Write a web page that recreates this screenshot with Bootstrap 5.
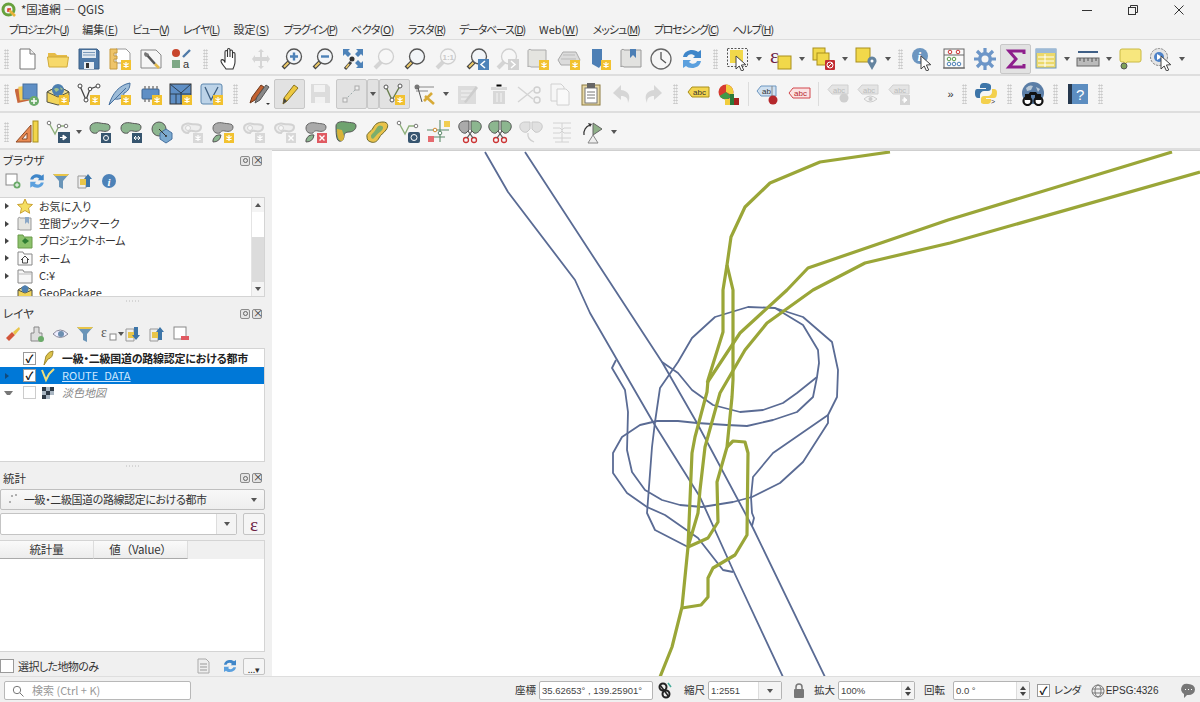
<!DOCTYPE html>
<html lang="ja"><head><meta charset="utf-8"><title>QGIS</title>
<link rel="stylesheet" href="https://cdn.jsdelivr.net/npm/bootstrap@5.3.0/dist/css/bootstrap.min.css">
<script src="https://cdn.jsdelivr.net/npm/bootstrap@5.3.0/dist/js/bootstrap.bundle.min.js"></script>
<style>
html,body{height:702px;overflow:hidden}
body{font-family:"Noto Sans CJK JP","Noto Sans",sans-serif;font-size:11px;color:#333;background:#f0f0f0;font-feature-settings:"palt";line-height:1.2;width:1200px}
.qshell{height:702px}
.qtitle{height:20px;background:#f3f3f3;font-size:11.5px;padding-left:1px}
.qmenu{height:20px;background:#f2f2f2;padding-left:9px;gap:14px;font-size:11px;border-bottom:1px solid #dcdcdc;white-space:nowrap}
.k05{letter-spacing:-.5px}.k10{letter-spacing:-1px}.k12{letter-spacing:-1.25px}.k14{letter-spacing:-1.45px}
.qbar{background:#f5f5f5;border-bottom:2px solid #dedede;padding-left:1px;flex:none}
.qb1{height:36px;padding-top:3px}.qb2{height:37px;padding-top:1px}.qb3{height:37px;padding-top:3px}
.ce{width:30.8px;height:30px;flex:none}
.ce svg,.qi{width:24px;height:24px;display:block}
.on{background:#e2e2e2;border:1px solid #c8c8c8;border-radius:2px}
.hd{width:15px;height:28px;flex:none}
.hd1{width:11px}.hd2{width:16px}.hd3{width:13px}.hd4{width:14px}.hd5{width:18px}
.hd i{display:block;width:5px;height:20px;background-image:radial-gradient(#c4c4c4 .8px,transparent .9px);background-size:2.5px 3px}
.ca{width:12px;height:30px;flex:none}
.cb{width:11px}
.ca i{display:block;border-left:3.5px solid transparent;border-right:3.5px solid transparent;border-top:4px solid #555}
.sepv{width:8px;height:26px;flex:none}
.sepv i{display:block;width:1px;height:24px;background:#dcdcdc}
.qmain{height:526px}
.qside{width:265px;flex:none}
.qsplit{width:7px;flex:none;background:#f0f0f0}
.qmap{flex:1;background:#fff;border-top:1px solid #cfcfcf;min-width:0}
.qmap svg{width:928px;height:525px;display:block}
.pt{height:18px;padding:0 3px;font-size:11.5px;white-space:nowrap}
.ptop{margin-top:2px}
.pb{width:10px;height:10px;border:1px solid #8c8c8c;border-radius:2px;background:#e4e4e4;position:relative;margin-left:2px;flex:none;display:block}
.pb::after{content:"";position:absolute;left:1.5px;top:1.5px;width:5px;height:5px;border-radius:50%;border:1px solid #666}
.px::after{border-radius:0;border:0;left:0;top:-2px;width:8px;height:10px;content:"×";font-size:10px;line-height:10px;text-align:center;color:#333}
.ptools{height:22px;padding-left:4px;gap:0}
.ptools>span{width:24px;height:22px;flex:none}
.ptools svg{width:18px;height:18px;display:block}
.tr{background:#fff;border:1px solid #d4d4d4;border-left:0;overflow:hidden}
.tr1{height:101px;margin-top:5px}
.tr2{height:115px;margin-top:3px;padding-top:1px}
.trow{height:17.3px;padding:0;border:0;background:transparent;font-size:11px;color:#333;border-radius:0;flex:none;white-space:nowrap}
.tw{width:13px;flex:none}
.tw i{display:block;margin-left:5px;border-top:3.5px solid transparent;border-bottom:3.5px solid transparent;border-left:4px solid #444}
.tw .dn{margin-left:4px;border-left:3.5px solid transparent;border-right:3.5px solid transparent;border-top:4px solid #777;border-bottom:0}
.tic{width:16px;height:16px;margin:0 6px 0 4px;flex:none;display:block}
.tic2{margin:0 6px 0 4px}
.qbold{letter-spacing:-.25px;color:#222;font-weight:700}
.qroute{font-size:11px;text-decoration:underline}
.qck{width:13px;height:13px;border:1px solid #9a9a9a;background:#fff;flex:none;font-size:11px;line-height:11px;text-align:center;color:#111;font-weight:700;display:block}
.qckm{margin-left:10px}
.qsel{background:#0078d7;color:#cfe8ff}
.qsb{width:13px;flex:none;border-left:1px solid #e4e4e4;background:#f4f4f4}
.qsa{height:14px;flex:none}
.qsa i{display:block;border-left:3.5px solid transparent;border-right:3.5px solid transparent}
.qst{height:25px;background:#fff;flex:none}
.qsg{flex:1;background:#dcdcdc}
.qgrip{height:8px;flex:none}
.qgrip i{display:block;width:16px;height:2px;background-image:radial-gradient(#bbb .7px,transparent .8px);background-size:3px 2px}
.qcombo{height:21px;margin-top:2px;background:linear-gradient(#f8f8f8,#eee);border:1px solid #bfbfbf;border-radius:2px;font-size:11px;letter-spacing:-.4px;padding:0 7px 0 5px;white-space:nowrap}
.qinp{height:22px;border:1px solid #c4c4c4;background:#fff;border-radius:2px}
.qeps{width:22px;height:22px;border:1px solid #c4c4c4;border-radius:2px;background:#f5f5f5;font:19px/1 "Liberation Serif",serif;color:#6d1f45}
.qtb{height:112px;margin-top:5px;background:#fff;border:1px solid #d4d4d4;border-left:0;overflow:hidden;flex:none}
.qhd{height:18px;background:#f0f0f0}
.qhc{height:18px;width:94px;flex:none;background:linear-gradient(#fafafa,#ececec);border-bottom:1px solid #aaa;border-right:1px solid #ddd;font-size:11.5px;font-feature-settings:normal;letter-spacing:-.2px}
.qbot{height:20px;margin-top:4px;white-space:nowrap}
.qsl{font-size:11px;letter-spacing:-.6px}
.qgp{margin-right:11px}
.qdots{width:22px;height:17px;border:1px solid #c4c4c4;border-radius:2px;background:#f5f5f5;font-size:9px;line-height:8px;flex:none}
.qstat{height:25px;background:#f0f0f0;border-top:1px solid #dedede;font-size:10.5px;padding:2px 0 0 4px;white-space:nowrap}
.qstat span{flex:none}
.qsearch{width:187px;height:19px;background:#fff;border:1px solid #b8b8b8;border-radius:2px;color:#999;font-size:11px;padding-left:7px;flex:none}
.qf{height:19px;background:#fff;border:1px solid #b4b4b4;border-radius:2px;font:9.5px "Liberation Sans",sans-serif;padding-left:2px;color:#444;flex:none}
.qsp{width:13px;align-self:stretch;flex:none;border-left:1px solid #ddd;background:#f4f4f4;gap:2px}
.qsp i{display:block;border-left:3px solid transparent;border-right:3px solid transparent}
.up{border-bottom:4px solid #444}.dw{border-top:4px solid #444}
.qcm{width:23px;align-self:stretch;flex:none;border-left:1px solid #ddd;background:#f4f4f4}
.qcm i{display:block;border-left:3.5px solid transparent;border-right:3.5px solid transparent;border-top:4px solid #555}
.s1{margin-left:324px}.s2{margin-left:3px;width:114px}.s3{margin:0 11px 0 4px}.s4{margin-left:3px;width:74px}.s5{margin:0 9px 0 11px}.s6{margin-left:3px;width:77px}.s7{margin-left:9px}.s8{margin-left:8px;width:77px}.s9{margin-left:7px}.s10{margin-left:4px;letter-spacing:-.5px}.s11{margin-left:10px}.s12{font:10px "Liberation Sans",sans-serif;margin-left:1px}.s13{margin-left:23px}
.qmore{width:43px;padding-left:29px;font:11px "Liberation Sans",sans-serif;flex:none}
.blu{stroke:#5a6b94;stroke-width:1.8;fill:none;stroke-linejoin:round}
.grn{stroke:#9aa638;stroke-width:3.2;fill:none;stroke-linejoin:round}
</style></head><body>
<svg width="0" height="0" class="position-absolute"><defs>
<g id="bd"><rect x="13" y="13" width="10" height="10" fill="#f2c230"/><path d="M18 15v6M15.4 16.5l5.2 3M15.4 19.5l5.2-3" stroke="#fff" stroke-width="1.2"/></g>
<g id="bg"><rect x="13" y="13" width="10" height="10" fill="#d8d8d8"/><path d="M18 15v6M15.4 16.5l5.2 3M15.4 19.5l5.2-3" stroke="#fff" stroke-width="1.2"/></g>
<g id="mg"><path d="M9 15L3 21" stroke="#444" stroke-width="4"/><path d="M8.5 15.5L4 20" stroke="#eecb6a" stroke-width="2"/><circle cx="14" cy="9.5" r="7.5" fill="#f2f5f8" stroke="#555" stroke-width="1.3"/></g>
<g id="mx"><path d="M9 15L3 21" stroke="#d4d4d4" stroke-width="4"/><circle cx="14" cy="9.5" r="7.5" fill="#f7f7f7" stroke="#d0d0d0" stroke-width="1.3"/></g>
<path id="blob" d="M2 8c0-5 6-6 10-5s10 0 10 4-4 5-8 4-5 2-5 2C5 14 2 12 2 8z" fill="#8cb68f" stroke="#555"/>
<path id="blbg" d="M2 8c0-5 6-6 10-5s10 0 10 4-4 5-8 4-5 2-5 2C5 14 2 12 2 8z" fill="#aaa" stroke="#666"/>
<g id="ring"><path d="M2 8c0-4 5-5 9-4s10-1 10 3-4 5-8 4-5 2-5 2C5 13 2 11 2 8z" fill="#eee" stroke="#d2d2d2" stroke-width="2"/><circle cx="8" cy="8" r="2.5" fill="#f7f7f7" stroke="#d2d2d2"/></g>
<g id="cur"><path d="M10 9l0 13 3.2-3 2.3 5 2.2-1-2.3-5 4.4-.3z" fill="#fff" stroke="#444" stroke-width="1"/></g>
<g id="vv"><path d="M4 5l6 13 8-14" fill="none" stroke="#6a7f4f" stroke-width="1.4"/><circle cx="4" cy="5" r="2" fill="#fff" stroke="#555"/><circle cx="18" cy="4" r="2" fill="#fff" stroke="#555"/><circle cx="10" cy="18" r="2" fill="#fff" stroke="#555"/></g>
<g id="doc"><path d="M5 2h10l5 5v15H5z" fill="#fff" stroke="#777"/><path d="M15 2v5h5" fill="#eee" stroke="#777"/></g>
<g id="abc"><path d="M6 5h17v10H6l-4-5z" fill="#f3d54f" stroke="#a98f1c"/><text x="7" y="13" font-size="8" font-family="Liberation Sans" fill="#333">abc</text></g>
<g id="abg"><path d="M6 3h16v9H6l-4-4.500z" fill="#e4e4e4" stroke="#d0d0d0"/><text x="7" y="10.500" font-size="7.500" font-family="Liberation Sans" fill="#bbb">abc</text></g>
<g id="sc"><circle cx="8" cy="20" r="2.500" fill="none" stroke="#c33" stroke-width="1.300"/><circle cx="16" cy="20" r="2.500" fill="none" stroke="#c33" stroke-width="1.300"/><path d="M9 18l5-7M15 18l-5-7" stroke="#555" stroke-width="1.200"/></g>
</defs></svg>
<div class="qshell d-flex flex-column">
<header class="qtitle d-flex align-items-center">
<svg class="qi me-1" style="width:16px;height:16px" viewBox="0 0 16 16"><circle cx="7.500" cy="7.500" r="5.500" fill="none" stroke="#67a13d" stroke-width="3"/><path d="M7 7l7 7" stroke="#e8b33a" stroke-width="2.600"/><path d="M7 10V7h3" fill="none" stroke="#d33" stroke-width="1.400"/></svg>
<span>*国道網 — QGIS</span>
<span class="ms-auto d-flex align-items-center" style="gap:36px;padding-right:16px">
<svg width="10" height="10" viewBox="0 0 10 10"><path d="M0 5.500h10" stroke="#333"/></svg>
<svg width="10" height="10" viewBox="0 0 10 10"><rect x=".5" y="2.500" width="7" height="7" fill="none" stroke="#333"/><path d="M2.500 2.500v-2h7v7h-2" fill="none" stroke="#333"/></svg>
<svg width="10" height="10" viewBox="0 0 10 10"><path d="M.5.500l9 9M9.500.500l-9 9" stroke="#333"/></svg>
</span></header>
<nav class="qmenu d-flex align-items-center">
<span class="k14">プロジェクト(<u>J</u>)</span><span>編集(<u>E</u>)</span><span class="k12">ビュー(<u>V</u>)</span><span class="k10">レイヤ(<u>L</u>)</span><span>設定(<u>S</u>)</span><span class="k12">プラグイン(<u>P</u>)</span><span class="k05">ベクタ(<u>O</u>)</span><span class="k10">ラスタ(<u>R</u>)</span><span class="k12">データベース(<u>D</u>)</span><span>Web(<u>W</u>)</span><span class="k10">メッシュ(<u>M</u>)</span><span class="k12">プロセシング(<u>C</u>)</span><span class="k10">ヘルプ(<u>H</u>)</span>
</nav>
<div class="qbar qb1 d-flex align-items-center">
<span class="hd hd1 d-flex align-items-center justify-content-center"><i></i></span>
<span class="ce d-flex align-items-center justify-content-center"><svg viewBox="0 0 24 24"><use href="#doc"/></svg></span>
<span class="ce d-flex align-items-center justify-content-center"><svg viewBox="0 0 24 24"><path d="M2 6h7l2 2h10v4H2z" fill="#e6bc48"/><path d="M3 20L1.500 10h21L21 20z" fill="#f7d96b" stroke="#d0aa3a"/></svg></span>
<span class="ce d-flex align-items-center justify-content-center"><svg viewBox="0 0 24 24"><path d="M2 2h18l2 2v18H2z" fill="#4f7aa8" stroke="#3b5f86"/><rect x="5" y="3" width="14" height="8" fill="#dfe8f0"/><path d="M6 5.500h12M6 8h12" stroke="#7a9abb"/><rect x="7" y="15" width="10" height="7" fill="#e8eef4"/><rect x="9" y="16" width="3" height="5" fill="#333"/></svg></span>
<span class="ce d-flex align-items-center justify-content-center"><svg viewBox="0 0 24 24"><path d="M8 2h10l4 4v10H8z" fill="#fff" stroke="#999"/><path d="M2 2h7v4H6v3h3v3H6v3h3v7H2z" fill="#eec46a" stroke="#c79a3c"/><use href="#bd"/></svg></span>
<span class="ce d-flex align-items-center justify-content-center"><svg viewBox="0 0 24 24"><path d="M2 3h15l5 5v13H2z" fill="#f6f6f6" stroke="#888"/><path d="M8 8l8 9" stroke="#555" stroke-width="2.600"/><path d="M16 17l4 4" stroke="#e3b94b" stroke-width="2.600"/><path d="M6 5a3 3 0 0 0 1 5l2-1 1-2z" fill="#777"/></svg></span>
<span class="ce d-flex align-items-center justify-content-center"><svg viewBox="0 0 24 24"><circle cx="7" cy="6" r="4" fill="#c8452c"/><rect x="3" y="13" width="8" height="8" fill="#7ea886"/><path d="M14 10l7-7" stroke="#4f7aa8" stroke-width="2.400"/><text x="14" y="21" font-size="11" font-family="Liberation Sans" fill="#333">a</text></svg></span>
<span class="hd hd5 d-flex align-items-center justify-content-center"><i></i></span>
<span class="ce d-flex align-items-center justify-content-center"><svg viewBox="0 0 24 24"><path d="M8 22c-2-3-5-6-5-8s2-1.500 3-.5l1 2V5c0-2 2.500-2 2.500 0v5V3c0-2 2.500-2 2.500 0v7V4.500c0-2 2.500-2 2.500 0V11V7c0-2 2.500-2 2.500 0v8c0 3-1 4-2 7z" fill="#fff" stroke="#333" stroke-width="1.100"/></svg></span>
<span class="ce d-flex align-items-center justify-content-center"><svg viewBox="0 0 24 24"><path d="M12 2l3 3h-2v5h5V8l3 4-3 4v-2h-5v5h2l-3 3-3-3h2v-5H6v2l-3-4 3-4v2h5V5H9z" fill="#d6d6d6"/></svg></span>
<span class="ce d-flex align-items-center justify-content-center"><svg viewBox="0 0 24 24"><use href="#mg"/><path d="M14 5.500v8M10 9.500h8" stroke="#4d82b8" stroke-width="2.400"/></svg></span>
<span class="ce d-flex align-items-center justify-content-center"><svg viewBox="0 0 24 24"><use href="#mg"/><path d="M10 9.500h8" stroke="#4d82b8" stroke-width="2.400"/></svg></span>
<span class="ce d-flex align-items-center justify-content-center"><svg viewBox="0 0 24 24"><path d="M2 2h7l-2 2 3 3-3 3-3-3-2 2zM22 2h-7l2 2-3 3 3 3 3-3 2 2zM22 21h-7l2-2-3-3 3-3 3 3 2-2z" fill="#4d82b8"/><path d="M10 15L4 22" stroke="#444" stroke-width="3"/><path d="M8 17L5 21" stroke="#eecb6a" stroke-width="1.600"/><circle cx="11" cy="12" r="2.500" fill="#333"/></svg></span>
<span class="ce d-flex align-items-center justify-content-center"><svg viewBox="0 0 24 24"><use href="#mx"/></svg></span>
<span class="ce d-flex align-items-center justify-content-center"><svg viewBox="0 0 24 24"><use href="#mg"/></svg></span>
<span class="ce d-flex align-items-center justify-content-center"><svg viewBox="0 0 24 24"><use href="#mx"/><text x="8.500" y="12.500" font-size="8" font-family="Liberation Sans" font-weight="700" fill="#c9c9c9">1:1</text></svg></span>
<span class="ce d-flex align-items-center justify-content-center"><svg viewBox="0 0 24 24"><use href="#mg"/><rect x="13" y="12" width="11" height="11" fill="#4d82b8"/><path d="M20 14l-4 3.500 4 3.500" fill="none" stroke="#fff" stroke-width="1.500"/></svg></span>
<span class="ce d-flex align-items-center justify-content-center"><svg viewBox="0 0 24 24"><use href="#mx"/><rect x="13" y="12" width="11" height="11" fill="#d2d2d2"/><path d="M16 14l4 3.500-4 3.500" fill="none" stroke="#fff" stroke-width="1.500"/></svg></span>
<span class="ce d-flex align-items-center justify-content-center"><svg viewBox="0 0 24 24"><path d="M2 4c0-2 3-2 3-1h15v17H5c-1-1-3-1-3 0z" fill="#e4e4e0" stroke="#aaa"/><use href="#bd"/></svg></span>
<span class="ce d-flex align-items-center justify-content-center"><svg viewBox="0 0 24 24"><path d="M1 13l5-8h13l4 8-3 5H4z" fill="#dcdcdc" stroke="#aaa"/><path d="M6 8h12M4 12h15" stroke="#bbb"/><use href="#bd"/></svg></span>
<span class="ce d-flex align-items-center justify-content-center"><svg viewBox="0 0 24 24"><path d="M4 2h10v15l-3 4-7-4z" fill="#4d7fb5"/><use href="#bd"/></svg></span>
<span class="ce d-flex align-items-center justify-content-center"><svg viewBox="0 0 24 24"><path d="M2 4c0-2 3-2 3-1h17v17H5c-1-1-3-1-3 0z" fill="#e2e2e0" stroke="#999"/><path d="M11 2h6v9l-3-3-3 3z" fill="#4d7fb5"/></svg></span>
<span class="ce d-flex align-items-center justify-content-center"><svg viewBox="0 0 24 24"><circle cx="12" cy="12" r="10" fill="#f6f6f6" stroke="#666" stroke-width="1.300"/><path d="M12 5v7l5 4" fill="none" stroke="#555" stroke-width="1.300"/></svg></span>
<span class="ce d-flex align-items-center justify-content-center"><svg viewBox="0 0 24 24"><path d="M3 10c1-5 5-7 9-7 3 0 5 1 6 2l3-2v8h-8l2-2c-3-3-7-2-8 1z" fill="#3f86c9"/><path d="M21 14c-1 5-5 7-9 7-3 0-5-1-6-2l-3 2v-8h8l-2 2c3 3 7 2 8-1z" fill="#5ba0de"/></svg></span>
<span class="hd d-flex align-items-center justify-content-center"><i></i></span>
<span class="ce d-flex align-items-center justify-content-center"><svg viewBox="0 0 24 24"><rect x="4" y="3" width="13" height="13" fill="#f1d84a"/><rect x="1.500" y="1.500" width="20" height="18" fill="none" stroke="#555" stroke-dasharray="2 1.500"/><use href="#cur"/></svg></span>
<span class="ca d-flex align-items-center justify-content-center"><i></i></span>
<span class="ce d-flex align-items-center justify-content-center"><svg viewBox="0 0 24 24"><rect x="9" y="9" width="13" height="13" fill="#f1d84a" stroke="#a98f1c"/><text x="1" y="16" font-size="21" font-family="Liberation Serif" fill="#6d1f45">ε</text></svg></span>
<span class="ca d-flex align-items-center justify-content-center"><i></i></span>
<span class="ce d-flex align-items-center justify-content-center"><svg viewBox="0 0 24 24"><rect x="1" y="1" width="12" height="12" fill="#f1d84a" stroke="#a98f1c"/><rect x="5" y="6" width="12" height="12" fill="#f1d84a" stroke="#a98f1c"/><rect x="13" y="13" width="10" height="10" rx="1" fill="#c22c32"/><circle cx="18" cy="18" r="3" fill="none" stroke="#fff"/><path d="M16 20l4-4" stroke="#fff"/></svg></span>
<span class="ca d-flex align-items-center justify-content-center"><i></i></span>
<span class="ce d-flex align-items-center justify-content-center"><svg viewBox="0 0 24 24"><rect x="2" y="1" width="14" height="14" fill="#f1d84a" stroke="#a98f1c"/><path d="M18 23l-4-7a4.500 4.500 0 1 1 8 0z" fill="#63839f"/><circle cx="18" cy="14" r="1.500" fill="#fff"/></svg></span>
<span class="ca d-flex align-items-center justify-content-center"><i></i></span>
<span class="hd hd4 d-flex align-items-center justify-content-center"><i></i></span>
<span class="ce d-flex align-items-center justify-content-center"><svg viewBox="0 0 24 24"><circle cx="9" cy="9" r="8" fill="#6d96c0"/><text x="6.500" y="14" font-size="13" font-style="italic" font-weight="700" font-family="Liberation Serif" fill="#fff">i</text><use href="#cur"/></svg></span>
<span class="ce d-flex align-items-center justify-content-center"><svg viewBox="0 0 24 24"><rect x="2" y="2" width="20" height="19" fill="#fafafa" stroke="#666"/><path d="M2 8h20M1 21h22" stroke="#666"/><circle cx="8" cy="5" r="1.800" fill="none" stroke="#c33"/><circle cx="16" cy="5" r="1.800" fill="none" stroke="#c33"/><circle cx="7" cy="12" r="1.800" fill="none" stroke="#5a9a4a"/><circle cx="12" cy="12" r="1.800" fill="none" stroke="#5a9a4a"/><circle cx="7" cy="17" r="1.800" fill="none" stroke="#4d82b8"/><circle cx="12" cy="17" r="1.800" fill="none" stroke="#4d82b8"/><circle cx="17" cy="17" r="1.800" fill="none" stroke="#4d82b8"/></svg></span>
<span class="ce d-flex align-items-center justify-content-center"><svg viewBox="0 0 24 24"><path d="M12 1v22M1 12h22M4 4l16 16M20 4L4 20" stroke="#6d96c8" stroke-width="3.200"/><circle cx="12" cy="12" r="7" fill="#6d96c8"/><circle cx="12" cy="12" r="3.500" fill="#f5f5f5"/></svg></span>
<span class="ce on d-flex align-items-center justify-content-center"><svg viewBox="0 0 24 24"><path d="M20 7V4H5l7 8-7 8h15v-3" fill="none" stroke="#8e1e8c" stroke-width="3"/></svg></span>
<span class="ce d-flex align-items-center justify-content-center"><svg viewBox="0 0 24 24"><rect x="2" y="2" width="20" height="19" fill="#ecd96a" stroke="#6d96c0"/><rect x="2" y="2" width="20" height="4" fill="#9dbad6"/><path d="M4 10h16M4 14h16M4 18h16M11 7v13" stroke="#fff"/></svg></span>
<span class="ca cb d-flex align-items-center justify-content-center"><i></i></span>
<span class="ce d-flex align-items-center justify-content-center"><svg viewBox="0 0 24 24"><path d="M2 5h20" stroke="#3f5f86" stroke-width="2"/><rect x="1" y="11" width="22" height="8" fill="#bbb" stroke="#666"/><path d="M4 11v3M8 11v4M12 11v3M16 11v4M20 11v3" stroke="#555"/></svg></span>
<span class="ca cb d-flex align-items-center justify-content-center"><i></i></span>
<span class="ce d-flex align-items-center justify-content-center"><svg viewBox="0 0 24 24"><path d="M4 2h17q2 0 2 2v9q0 2-2 2H9l-3 3v-3H4q-2 0-2-2V4q0-2 2-2z" fill="#f7e77e" stroke="#caba45"/><circle cx="6" cy="19" r="3" fill="#7ea05a" stroke="#555"/></svg></span>
<span class="ce d-flex align-items-center justify-content-center"><svg viewBox="0 0 24 24"><circle cx="10" cy="10" r="8.500" fill="#e4e4e4" stroke="#888" stroke-dasharray="2.500 1"/><circle cx="10" cy="10" r="5" fill="#4d82c8"/><path d="M8 7l5 3-5 3z" fill="#fff"/><use href="#cur" transform="translate(2 0)"/></svg></span>
<span class="ca cb d-flex align-items-center justify-content-center"><i></i></span>
</div>
<div class="qbar qb2 d-flex align-items-center">
<span class="hd hd1 d-flex align-items-center justify-content-center"><i></i></span>
<span class="ce d-flex align-items-center justify-content-center"><svg viewBox="0 0 24 24"><rect x="1" y="6" width="12" height="14" fill="#c8673c" transform="rotate(-12 7 13)"/><rect x="4" y="4" width="12" height="14" fill="#f1cd5a" transform="rotate(-6 10 11)"/><rect x="8" y="2" width="14" height="15" fill="#5f8fc5" stroke="#46709f"/><circle cx="19" cy="19" r="5" fill="#6bab6a"/><path d="M19 16v6M16 19h6" stroke="#fff" stroke-width="1.500"/></svg></span>
<span class="ce d-flex align-items-center justify-content-center"><svg viewBox="0 0 24 24"><path d="M1 10l11-6 11 6v10l-11 3-11-3z" fill="#f1d45a" stroke="#554"/><path d="M1 10l11 5 11-5-11-6z" fill="#eadf9c" stroke="#554"/><circle cx="12" cy="8" r="6" fill="#4d7fb0"/><path d="M8 7c2-2 5-1 5 1l-3 2zM14 5l3 2-2 1z" fill="#9fc08a"/><use href="#bd"/></svg></span>
<span class="ce d-flex align-items-center justify-content-center"><svg viewBox="0 0 24 24"><path d="M3 4l6 14 4-11 8-3" fill="none" stroke="#444" stroke-width="1.300"/><circle cx="3" cy="4" r="2" fill="#fff" stroke="#444"/><circle cx="13" cy="7" r="1.800" fill="#fff" stroke="#444"/><circle cx="21" cy="4" r="2" fill="#fff" stroke="#444"/><circle cx="9" cy="18" r="2" fill="#fff" stroke="#444"/><use href="#bd"/></svg></span>
<span class="ce d-flex align-items-center justify-content-center"><svg viewBox="0 0 24 24"><path d="M1 23C4 12 11 3 22 1c0 6-3 9-6 10 0 4-4 7-9 6z" fill="#9dbcd8" stroke="#46709f"/><path d="M3 21L18 6" stroke="#46709f"/><use href="#bd"/></svg></span>
<span class="ce d-flex align-items-center justify-content-center"><svg viewBox="0 0 24 24"><rect x="3" y="7" width="17" height="10" rx="1" fill="#5f8fc5" stroke="#3e6590"/><path d="M6 4v3M10 4v3M14 4v3M18 4v3M6 17v3M10 17v3" stroke="#777" stroke-width="1.400"/><use href="#bd"/></svg></span>
<span class="ce d-flex align-items-center justify-content-center"><svg viewBox="0 0 24 24"><rect x="1" y="2" width="21" height="20" fill="#5f8fc5" stroke="#333"/><path d="M1 2l11 9 10-9M1 12h21M12 11v11M7 12v10" stroke="#2c3e50" fill="none"/><use href="#bd"/></svg></span>
<span class="ce d-flex align-items-center justify-content-center"><svg viewBox="0 0 24 24"><rect x="1" y="2" width="21" height="20" rx="2" fill="#bcd3e8" stroke="#5c87ae"/><path d="M5 5l6 13 7-13" fill="none" stroke="#3e5f80" stroke-width="1.300"/><use href="#bd"/></svg></span>
<span class="hd hd2 d-flex align-items-center justify-content-center"><i></i></span>
<span class="ce d-flex align-items-center justify-content-center"><svg viewBox="0 0 24 24"><path d="M3 21l2-6L14 3l3 2-9 13z" fill="#c1602e" stroke="#6e3a1e"/><path d="M8 21l2-6 9-12 3 2-9 13z" fill="#888" stroke="#555"/><path d="M19 21l4 0-2 2z" fill="#333"/></svg></span>
<span class="ce on d-flex align-items-center justify-content-center"><svg viewBox="0 0 24 24"><path d="M5 22l1-6L16 3l4 3L9 19z" fill="#edc840" stroke="#8b7420"/><path d="M5 22l1-6 3 3z" fill="#444"/></svg></span>
<span class="ce d-flex align-items-center justify-content-center"><svg viewBox="0 0 24 24"><path d="M2 2h16l3 3v16H2z" fill="#dcdcdc"/><rect x="5" y="3" width="11" height="7" fill="#f2f2f2"/><rect x="6" y="15" width="10" height="6" fill="#f2f2f2"/></svg></span>
<span class="ce on d-flex align-items-center justify-content-center"><svg viewBox="0 0 24 24"><path d="M6 18L18 6" stroke="#9aa" stroke-dasharray="2 2"/><rect x="4" y="16" width="4" height="4" fill="#eee" stroke="#aaa"/><rect x="16" y="4" width="4" height="4" fill="#eee" stroke="#aaa"/></svg></span>
<span class="ca on d-flex align-items-center justify-content-center"><i></i></span>
<span class="ce on d-flex align-items-center justify-content-center"><svg viewBox="0 0 24 24"><use href="#vv"/><use href="#bd"/></svg></span>
<span class="ce d-flex align-items-center justify-content-center"><svg viewBox="0 0 24 24"><path d="M3 5h18M3 9h12" stroke="#888"/><circle cx="4" cy="5" r="2.500" fill="#777"/><path d="M5 6l4 14" stroke="#555"/><path d="M12 14l9 8M11 19l8-8" stroke="#d7aa37" stroke-width="2.600"/></svg></span>
<span class="ca d-flex align-items-center justify-content-center"><i></i></span>
<span class="ce d-flex align-items-center justify-content-center"><svg viewBox="0 0 24 24"><rect x="2" y="4" width="18" height="18" fill="#dcdcdc"/><path d="M5 9h12M5 13h10M5 17h8" stroke="#f5f5f5"/><path d="M8 20L20 4l2 2-12 15z" fill="#cdcdcd"/></svg></span>
<span class="ce d-flex align-items-center justify-content-center"><svg viewBox="0 0 24 24"><path d="M4 5h16v3H4zM6 9h12v13H6z" fill="#d8d8d8"/><path d="M9 2h6v3H9zM10 11v9M14 11v9" stroke="#f5f5f5"/></svg></span>
<span class="ce d-flex align-items-center justify-content-center"><svg viewBox="0 0 24 24"><path d="M1 5l15 12M1 20L16 8" stroke="#d4d4d4" stroke-width="1.500"/><circle cx="20" cy="8" r="3" fill="none" stroke="#d0d0d0" stroke-width="1.500"/><circle cx="20" cy="18" r="3" fill="none" stroke="#d0d0d0" stroke-width="1.500"/></svg></span>
<span class="ce d-flex align-items-center justify-content-center"><svg viewBox="0 0 24 24"><path d="M3 2h10l3 3v14H3z" fill="#f6f6f6" stroke="#d0d0d0"/><path d="M9 7h9l3 3v13H9z" fill="#f9f9f9" stroke="#d0d0d0"/></svg></span>
<span class="ce d-flex align-items-center justify-content-center"><svg viewBox="0 0 24 24"><rect x="3" y="3" width="18" height="20" fill="#e8d9a6" stroke="#8c7a40"/><rect x="6" y="6" width="12" height="15" fill="#fff" stroke="#777"/><rect x="8" y="1" width="8" height="5" fill="#666"/><path d="M8 10h8M8 13h8M8 16h8" stroke="#777"/></svg></span>
<span class="ce d-flex align-items-center justify-content-center"><svg viewBox="0 0 24 24"><path d="M11 3L3 11l8 7v-4c5 0 7 2 7 7 3-7 1-12-7-13z" fill="#d6d6d6"/></svg></span>
<span class="ce d-flex align-items-center justify-content-center"><svg viewBox="0 0 24 24"><path d="M13 3l8 8-8 7v-4c-5 0-7 2-7 7-3-7-1-12 7-13z" fill="#d6d6d6"/></svg></span>
<span class="hd d-flex align-items-center justify-content-center"><i></i></span>
<span class="ce d-flex align-items-center justify-content-center"><svg viewBox="0 0 24 24"><use href="#abc"/></svg></span>
<span class="ce d-flex align-items-center justify-content-center"><svg viewBox="0 0 24 24"><circle cx="9" cy="10" r="7.500" fill="#d63a2f"/><path d="M9 10V2.500a7.500 7.500 0 0 1 6.500 11z" fill="#f1cd3d"/><path d="M9 10l-6.500 4a7.500 7.500 0 0 0 12 .5z" fill="#3f9a48"/><rect x="8" y="17" width="5" height="6" fill="#f1cd3d"/><rect x="13" y="12" width="4" height="11" fill="#2d7a3a"/><rect x="17" y="16" width="5" height="7" fill="#a6231f"/></svg></span>
<span class="sepv d-flex align-items-center justify-content-center"><i></i></span>
<span class="ce d-flex align-items-center justify-content-center"><svg viewBox="0 0 24 24"><path d="M5 4h15v10H5l-4-5z" fill="#cfe0f0" stroke="#6d96c0"/><text x="6" y="12" font-size="8" font-family="Liberation Sans" fill="#333">ab</text><path d="M16 4v13" stroke="#888"/><circle cx="17" cy="18" r="4.500" fill="#b5282c"/></svg></span>
<span class="ce d-flex align-items-center justify-content-center"><svg viewBox="0 0 24 24"><path d="M6 6h17v10H6l-4-5z" fill="#fbe3e3" stroke="#d2474c"/><text x="7" y="14" font-size="8" font-family="Liberation Sans" fill="#b5282c">abc</text></svg></span>
<span class="sepv d-flex align-items-center justify-content-center"><i></i></span>
<span class="ce d-flex align-items-center justify-content-center"><svg viewBox="0 0 24 24"><use href="#abg"/><circle cx="18" cy="16" r="4.500" fill="#cfcfcf"/></svg></span>
<span class="ce d-flex align-items-center justify-content-center"><svg viewBox="0 0 24 24"><use href="#abg"/><path d="M8 17q6-6 13 0-7 6-13 0z" fill="#f2f2f2" stroke="#ccc"/><circle cx="14.500" cy="17" r="2" fill="#ccc"/></svg></span>
<span class="ce d-flex align-items-center justify-content-center"><svg viewBox="0 0 24 24"><use href="#abg"/><rect x="13" y="13" width="10" height="10" fill="#d4d4d4"/><path d="M15 18h4M17 15.500l3 2.500-3 2.500z" stroke="#fff" fill="#fff"/></svg></span>
<span class="qmore d-flex align-items-center justify-content-center">»</span>
<span class="hd hd3 d-flex align-items-center justify-content-center"><i></i></span>
<span class="ce d-flex align-items-center justify-content-center"><svg viewBox="0 0 24 24"><path d="M11 1c-5 0-5 2-5 5h6v1H3c-2 0-2 3-2 5s1 4 3 4h2v-3c0-2 2-4 4-4h4c2 0 3-1 3-3V4c0-2-3-3-6-3z" fill="#3d75a8"/><path d="M12 22c5 0 5-2 5-5h-5v-1h8c2 0 3-2 3-5s-1-4-3-4h-2v3c0 2-2 4-4 4h-4c-2 0-3 1-3 3v3c0 2 3 2 5 2z" fill="#f3d04d"/><text x="17" y="22" font-size="7" font-family="Liberation Sans" fill="#333">&gt;</text></svg></span>
<span class="hd hd2 d-flex align-items-center justify-content-center"><i></i></span>
<span class="ce d-flex align-items-center justify-content-center"><svg viewBox="0 0 24 24"><circle cx="12" cy="11" r="11" fill="#5a7da6"/><path d="M5 6c3-3 5-3 7-2l-2 4-4 1zM15 5l4 2-2 3z" fill="#b9c8d6"/><path d="M7 13l2-3h6l2 3z" fill="#111"/><circle cx="6.500" cy="19" r="4" fill="#fff" stroke="#111" stroke-width="2.200"/><circle cx="17.500" cy="19" r="4" fill="#fff" stroke="#111" stroke-width="2.200"/><rect x="4" y="12" width="6" height="6" fill="#111"/><rect x="14" y="12" width="6" height="6" fill="#111"/></svg></span>
<span class="hd hd4 d-flex align-items-center justify-content-center"><i></i></span>
<span class="ce d-flex align-items-center justify-content-center"><svg viewBox="0 0 24 24"><rect x="2" y="2" width="20" height="20" fill="#5c8dc0"/><rect x="2" y="2" width="4" height="20" fill="#26384e"/><text x="10" y="18" font-size="15" font-family="Liberation Sans" fill="#fff">?</text></svg></span>
<span class="hd d-flex align-items-center justify-content-center"><i></i></span>
</div>
<div class="qbar qb3 d-flex align-items-center">
<span class="hd hd1 d-flex align-items-center justify-content-center"><i></i></span>
<span class="ce d-flex align-items-center justify-content-center"><svg viewBox="0 0 24 24"><path d="M1 22L16 5v17z" fill="#e98a52" stroke="#8e4a26"/><path d="M7 19l5-6v6z" fill="#f5f5f5" stroke="#8e4a26"/><rect x="18" y="1" width="5" height="21" fill="#f1d54a" stroke="#a98f1c"/></svg></span>
<span class="ce d-flex align-items-center justify-content-center"><svg viewBox="0 0 24 24"><path d="M3 3l6 11 4-8h7" fill="none" stroke="#8eb07a" stroke-width="1.400"/><circle cx="3" cy="3" r="1.800" fill="#fff" stroke="#777"/><circle cx="13" cy="6" r="1.800" fill="#fff" stroke="#777"/><circle cx="20" cy="6" r="1.800" fill="#fff" stroke="#777"/><rect x="12" y="12" width="12" height="11" fill="#37556f"/><path d="M14 17.500h5M17 15l3.500 2.500-3.500 2.500z" stroke="#fff" fill="#fff"/></svg></span>
<span class="ca cb d-flex align-items-center justify-content-center"><i></i></span>
<span class="ce d-flex align-items-center justify-content-center"><svg viewBox="0 0 24 24"><use href="#blob"/><rect x="13" y="13" width="10" height="10" fill="#37556f"/><circle cx="18" cy="18" r="2.500" fill="none" stroke="#fff"/></svg></span>
<span class="ce d-flex align-items-center justify-content-center"><svg viewBox="0 0 24 24"><use href="#blob"/><rect x="13" y="13" width="10" height="10" fill="#37556f"/><path d="M15 18h6M15 18l2-2M15 18l2 2M21 18l-2-2M21 18l-2 2" stroke="#fff"/></svg></span>
<span class="ce d-flex align-items-center justify-content-center"><svg viewBox="0 0 24 24"><circle cx="9" cy="9" r="7" fill="#8cb68f" stroke="#555"/><path d="M16 9l6 4v6l-6 4-6-4v-6z" fill="#7ba9cf" stroke="#46709f"/><path d="M9 9l7 7" stroke="#333"/><circle cx="16" cy="16" r="1" fill="#333"/></svg></span>
<span class="ce d-flex align-items-center justify-content-center"><svg viewBox="0 0 24 24"><use href="#ring"/><use href="#bg"/></svg></span>
<span class="ce d-flex align-items-center justify-content-center"><svg viewBox="0 0 24 24"><use href="#blbg"/><path d="M2 20q2-6 8-5-1 7-8 7z" fill="#8cb68f" stroke="#555"/><use href="#bd"/></svg></span>
<span class="ce d-flex align-items-center justify-content-center"><svg viewBox="0 0 24 24"><use href="#ring"/><use href="#bg"/></svg></span>
<span class="ce d-flex align-items-center justify-content-center"><svg viewBox="0 0 24 24"><use href="#ring"/><rect x="13" y="13" width="10" height="10" fill="#d8d8d8"/><path d="M15.500 15.500l5 5M20.500 15.500l-5 5" stroke="#fff" stroke-width="1.400"/></svg></span>
<span class="ce d-flex align-items-center justify-content-center"><svg viewBox="0 0 24 24"><use href="#blbg"/><path d="M2 20q2-6 8-5-1 7-8 7z" fill="#8cb68f" stroke="#555"/><rect x="13" y="13" width="10" height="10" fill="#e05a62"/><path d="M15.500 15.500l5 5M20.500 15.500l-5 5" stroke="#fff" stroke-width="1.400"/></svg></span>
<span class="ce d-flex align-items-center justify-content-center"><svg viewBox="0 0 24 24"><path d="M2 6c0-4 5-5 10-4s10 0 10 4-4 6-7 6-5 1-5 4-2 6-5 5-3-10-3-15z" fill="#6fa36f" stroke="#555"/><path d="M3 9q0 11 4 12 3 0 3-5l-2-6z" fill="#d9b338"/></svg></span>
<span class="ce d-flex align-items-center justify-content-center"><svg viewBox="0 0 24 24"><path d="M2 17c-1-4 4-5 6-9s5-6 10-6 6 4 3 8-5 4-7 8-5 5-8 4-4-2-4-5z" fill="#e9c24a" stroke="#6e6a2c"/><path d="M6 16c0-2 3-3 5-7s4-4 6-3 1 4-2 6-4 4-6 6-3 0-3-2z" fill="#7cae6c"/></svg></span>
<span class="ce d-flex align-items-center justify-content-center"><svg viewBox="0 0 24 24"><path d="M3 3l6 11 4-8h7" fill="none" stroke="#8eb07a" stroke-width="1.400"/><circle cx="3" cy="3" r="1.800" fill="#fff" stroke="#777"/><circle cx="20" cy="6" r="1.800" fill="#fff" stroke="#777"/><rect x="12" y="12" width="12" height="11" rx="2" fill="#37556f"/><circle cx="18" cy="17.500" r="3" fill="none" stroke="#fff"/></svg></span>
<span class="ce d-flex align-items-center justify-content-center"><svg viewBox="0 0 24 24"><path d="M0 10h22M13 0v22M4 17h14" stroke="#5b8a6a" stroke-width="1.100"/><rect x="17" y="1" width="6" height="6" fill="#f1cd50"/><rect x="1" y="16" width="6" height="6" fill="#e56a6f"/><circle cx="8" cy="10" r="1.800" fill="#fff" stroke="#d08a30"/><circle cx="13" cy="13" r="1.800" fill="#fff" stroke="#5b8a6a"/></svg></span>
<span class="ce d-flex align-items-center justify-content-center"><svg viewBox="0 0 24 24"><path d="M11 1H7C2 1 0 5 1 8s4 6 7 5l3-3z" fill="#aaa" stroke="#555"/><path d="M13 1h4c5 0 7 4 6 7s-4 6-7 5l-3-3z" fill="#8cb68f" stroke="#555"/><use href="#sc"/></svg></span>
<span class="ce d-flex align-items-center justify-content-center"><svg viewBox="0 0 24 24"><path d="M11 1H7C2 1 0 5 1 8s4 6 7 5l3-3z" fill="#8cb68f" stroke="#555"/><path d="M13 1h4c5 0 7 4 6 7s-4 6-7 5l-3-3z" fill="#8cb68f" stroke="#555"/><use href="#sc"/></svg></span>
<span class="ce d-flex align-items-center justify-content-center"><svg viewBox="0 0 24 24"><path d="M11 2H6C2 2 0 5 1 8s4 5 7 4l3-3zM13 2h5c4 0 6 3 5 6s-4 5-7 4l-3-3z" fill="#e0e0e0" stroke="#c8c8c8"/><path d="M9 13q-1 6 6 9" fill="none" stroke="#d0d0d0" stroke-width="1.300"/></svg></span>
<span class="ce d-flex align-items-center justify-content-center"><svg viewBox="0 0 24 24"><path d="M3 3h18M3 8h7l2 2 2-2h7M3 13h7l2-2 2 2h7M3 18h18M5 22h14M12 3v19" stroke="#d2d2d2" fill="none"/></svg></span>
<span class="ce d-flex align-items-center justify-content-center"><svg viewBox="0 0 24 24"><path d="M12 3v12l9-6z" fill="#8fb088" stroke="#666"/><path d="M12 15l-5 8h10z" fill="#eee" stroke="#888"/><path d="M9 5a9 9 0 0 0-6 10" fill="none" stroke="#333" stroke-width="1.200"/><path d="M7 3l4 1-2 3z" fill="#333"/></svg></span>
<span class="ca d-flex align-items-center justify-content-center"><i></i></span>
</div>
<main class="qmain d-flex">
<aside class="qside d-flex flex-column">
<div class="pt ptop d-flex align-items-center"><span>ブラウザ</span><span class="ms-auto d-flex"><span class="pb"></span><span class="pb px"></span></span></div>
<div class="ptools d-flex align-items-center">
<span class="d-flex align-items-center"><svg viewBox="0 0 18 18"><rect x="2" y="2" width="11" height="11" fill="#fff" stroke="#888"/><circle cx="13" cy="13" r="3.500" fill="#6bab6a"/><path d="M13 11v4M11 13h4" stroke="#fff"/></svg></span>
<span class="d-flex align-items-center"><svg viewBox="0 0 24 24"><path d="M3 10c1-5 5-7 9-7 3 0 5 1 6 2l3-2v8h-8l2-2c-3-3-7-2-8 1z" fill="#3f86c9"/><path d="M21 14c-1 5-5 7-9 7-3 0-5-1-6-2l-3 2v-8h8l-2 2c3 3 7 2 8-1z" fill="#5ba0de"/></svg></span>
<span class="d-flex align-items-center"><svg viewBox="0 0 18 18"><path d="M1 2h16l-6 7v8l-4-2V9z" fill="#6a95b8"/><path d="M1 2h16l-2 2H3z" fill="#e8c54a"/></svg></span>
<span class="d-flex align-items-center"><svg viewBox="0 0 18 18"><path d="M2 4h8v12H2z" fill="#eee" stroke="#999"/><rect x="4" y="7" width="6" height="6" fill="#e8c54a"/><path d="M12 2l4 5h-2v8h-4V7H8z" fill="#3d75a8"/></svg></span>
<span class="d-flex align-items-center"><svg viewBox="0 0 18 18"><circle cx="9" cy="9" r="7" fill="#4d82b8"/><text x="7.500" y="13.500" font-size="11" font-style="italic" font-weight="700" font-family="Liberation Serif" fill="#fff">i</text></svg></span>
</div>
<div class="tr tr1 d-flex">
<div class="list-group list-group-flush flex-fill" style="min-width:0">
<div class="list-group-item trow d-flex align-items-center"><span class="tw"><i></i></span><svg class="tic" viewBox="0 0 16 16"><path d="M8 1l2.200 5 5.300.5-4 3.500 1.200 5.300L8 12.500l-4.700 2.800L4.500 10l-4-3.500L5.800 6z" fill="#f5de62" stroke="#c9a233"/></svg><span>お気に入り</span></div>
<div class="list-group-item trow d-flex align-items-center"><span class="tw"><i></i></span><svg class="tic" viewBox="0 0 16 16"><path d="M1 3c0-2 2-2 2-1h11v12H3c-1-1-2-1-2 0z" fill="#e4e4e0" stroke="#999"/><path d="M8 1h4v7l-2-2-2 2z" fill="#8aa7c6"/></svg><span>空間ブックマーク</span></div>
<div class="list-group-item trow d-flex align-items-center"><span class="tw"><i></i></span><svg class="tic" viewBox="0 0 16 16"><path d="M1 2h5l1 2h8v11H1z" fill="#8cc26c" stroke="#6a9a4a"/><path d="M8 5l4 3-4 3-3-3z" fill="#2f7d32"/></svg><span class="k05">プロジェクトホーム</span></div>
<div class="list-group-item trow d-flex align-items-center"><span class="tw"><i></i></span><svg class="tic" viewBox="0 0 16 16"><path d="M1 2h5l1 2h8v11H1z" fill="#fafafa" stroke="#888"/><path d="M4 10l4-4 4 4M5.500 9v4h5V9" fill="none" stroke="#444"/></svg><span>ホーム</span></div>
<div class="list-group-item trow d-flex align-items-center"><span class="tw"><i></i></span><svg class="tic" viewBox="0 0 16 16"><path d="M1 2h5l1 2h8v11H1z" fill="#f6f6f6" stroke="#888"/><path d="M1 6h14" stroke="#bbb"/></svg><span>C:¥</span></div>
<div class="list-group-item trow d-flex align-items-center"><span class="tw"></span><svg class="tic" viewBox="0 0 16 16"><path d="M1 5l7-4 7 4v7l-7 3-7-3z" fill="#f1d45a" stroke="#554"/><path d="M1 5l7 3 7-3-7-4z" fill="#eadf9c" stroke="#554"/><circle cx="8" cy="4" r="3.500" fill="#4d7fb0"/></svg><span>GeoPackage</span></div>
</div>
<div class="qsb d-flex flex-column"><span class="qsa d-flex align-items-center justify-content-center"><i style="border-bottom:4px solid #555"></i></span><span class="qst"></span><span class="qsg"></span><span class="qsa d-flex align-items-center justify-content-center"><i style="border-top:4px solid #555"></i></span></div>
</div>
<div class="qgrip d-flex align-items-center justify-content-center"><i></i></div>
<div class="pt d-flex align-items-center"><span>レイヤ</span><span class="ms-auto d-flex"><span class="pb"></span><span class="pb px"></span></span></div>
<div class="ptools d-flex align-items-center">
<span class="d-flex align-items-center"><svg viewBox="0 0 18 18"><path d="M2 13l6-6 3 3-6 6z" fill="#d2553a"/><path d="M9 7l6-5 1 2-5 6z" fill="#e8c54a"/></svg></span>
<span class="d-flex align-items-center"><svg viewBox="0 0 18 18"><path d="M6 2h5v6h3v8H3V8h3z" fill="#ddd" stroke="#888"/><circle cx="13" cy="14" r="3" fill="#6bab6a"/></svg></span>
<span class="d-flex align-items-center"><svg viewBox="0 0 18 18"><path d="M1 9q7-8 15 0-8 7-15 0z" fill="#eef" stroke="#889"/><circle cx="9" cy="9" r="3" fill="#6d8fb0"/></svg></span>
<span class="d-flex align-items-center"><svg viewBox="0 0 18 18"><path d="M1 2h16l-6 7v8l-4-2V9z" fill="#6a95b8"/><path d="M1 2h16l-2 2H3z" fill="#e8c54a"/></svg></span>
<span class="d-flex align-items-center"><svg viewBox="0 0 18 18"><text x="1" y="12" font-size="14" font-family="Liberation Serif" fill="#555">ε</text><rect x="10" y="9" width="6" height="6" fill="#fff" stroke="#888"/></svg><i style="display:block;border-left:3px solid transparent;border-right:3px solid transparent;border-top:4px solid #555"></i></span>
<span class="d-flex align-items-center"><svg viewBox="0 0 18 18"><path d="M2 4h8v12H2z" fill="#eee" stroke="#999"/><rect x="4" y="7" width="6" height="6" fill="#e8c54a"/><path d="M12 15l4-5h-2V2h-4v8H8z" fill="#3d75a8"/></svg></span>
<span class="d-flex align-items-center"><svg viewBox="0 0 18 18"><path d="M2 4h8v12H2z" fill="#eee" stroke="#999"/><rect x="4" y="7" width="6" height="6" fill="#e8c54a"/><path d="M12 2l4 5h-2v8h-4V7H8z" fill="#3d75a8"/></svg></span>
<span class="d-flex align-items-center"><svg viewBox="0 0 18 18"><rect x="2" y="2" width="12" height="12" fill="#fff" stroke="#888"/><rect x="9" y="11" width="8" height="4" fill="#e05a62"/></svg></span>
</div>
<div class="tr tr2"><div class="list-group list-group-flush">
<div class="list-group-item trow d-flex align-items-center"><span class="tw"></span><span class="qck qckm">✓</span><svg class="tic tic2" viewBox="0 0 16 16"><path d="M4 15L6 6q3-5 7-5 0 7-5 8z" fill="#dcc24a" stroke="#a08a30"/></svg><span class="qbold">一級・二級国道の路線認定における都市</span></div>
<div class="list-group-item trow qsel d-flex align-items-center"><span class="tw"><i style="border-left-color:#114a7c"></i></span><span class="qck qckm">✓</span><svg class="tic tic2" viewBox="0 0 16 16"><path d="M2 2l4 10 3-6 5-5" fill="none" stroke="#f0de7a" stroke-width="2"/></svg><span class="qroute">ROUTE_DATA</span></div>
<div class="list-group-item trow d-flex align-items-center"><span class="tw"><i class="dn"></i></span><span class="qck qckm" style="border-color:#ccc"></span><svg class="tic tic2" viewBox="0 0 16 16"><path d="M2 2h4v4H2zM10 2h4v4h-4zM6 6h4v4H6zM2 10h4v4H2z" fill="#2e3a46"/><path d="M6 2h4v4H6zM2 6h4v4H2zM10 6h4v4h-4zM6 10h4v4H6z" fill="#a9b6c2"/></svg><span class="fst-italic" style="color:#888">淡色地図</span></div>
</div></div>
<div class="qgrip d-flex align-items-center justify-content-center"><i></i></div>
<div class="pt d-flex align-items-center"><span>統計</span><span class="ms-auto d-flex"><span class="pb"></span><span class="pb px"></span></span></div>
<div class="qcombo d-flex align-items-center"><svg width="14" height="14" viewBox="0 0 14 14" class="me-1"><circle cx="4" cy="9" r="1" fill="#999"/><circle cx="6" cy="3" r="1" fill="#999"/><circle cx="10" cy="2" r="1" fill="#999"/></svg><span>一級・二級国道の路線認定における都市</span><span class="ms-auto" style="border-left:3.500px solid transparent;border-right:3.500px solid transparent;border-top:4px solid #555"></span></div>
<div class="d-flex justify-content-between" style="margin-top:3px">
<div class="qinp d-flex flex-fill justify-content-end" style="margin-right:6px"><span class="qcm d-flex align-items-center justify-content-center" style="width:20px"><i></i></span></div>
<div class="qeps d-flex align-items-center justify-content-center">ε</div></div>
<div class="qtb"><div class="qhd d-flex">
<div class="qhc d-flex align-items-center justify-content-center">統計量</div>
<div class="qhc d-flex align-items-center justify-content-center">値（Value）</div></div></div>
<div class="qbot d-flex align-items-center">
<span class="qck me-1" style="width:14px;height:14px"></span><span class="qsl">選択した地物のみ</span>
<span class="ms-auto d-flex align-items-center"><svg width="14" height="16" viewBox="0 0 14 16" class="qgp"><path d="M1 1h8l3 3v11H1z" fill="#eee" stroke="#aaa"/><path d="M3 6h7M3 9h7M3 12h7" stroke="#999"/></svg>
<svg width="16" height="16" viewBox="0 0 24 24" style="margin-right:5px"><path d="M3 10c1-5 5-7 9-7 3 0 5 1 6 2l3-2v8h-8l2-2c-3-3-7-2-8 1z" fill="#3f86c9"/><path d="M21 14c-1 5-5 7-9 7-3 0-5-1-6-2l-3 2v-8h8l-2 2c3 3 7 2 8-1z" fill="#5ba0de"/></svg>
<span class="qdots d-flex align-items-end justify-content-center">...▾</span></span></div>
</aside>
<div class="qsplit"></div>
<section class="qmap">
<svg viewBox="272 151 928 525" preserveAspectRatio="none">
<g class="blu">
<path d="M525 152L615 290L662 362L697 423L753 528L825 677"/>
<path d="M485 152L508 192L575 280L590 313L653 422L700 497L733 570L783 677"/>
<path d="M616 360L612 368L625 390L628 412L627 450L632 472L645 490L662 500L680 505L702 507L733 502L752 497L780 483L803 462L828 423L828 415L837 397L838 370L832 342L803 317L775 308L748 307L715 317L692 338L678 362L660 388L655 422L652 447L648 500L647 513L655 530L688 547"/>
<path d="M828 415L773 453L753 477L751 497L752 513L754 518L752 526"/>
<path d="M662 362L678 373L692 390L713 405L740 412L763 410L783 403L797 393L817 377"/>
<path d="M775 308L803 325L818 350L819 363L817 377L813 397L797 412L773 420L747 426L727 425L697 423L678 421L657 421L640 425L622 437L613 453L613 473L627 493L647 507L665 515L698 538L723 570L733 572"/>
</g>
<g class="grn">
<path d="M890 152L820 162L770 183L745 207L731 237L727 265L723 290L723 332L708 380L707 392L695 437L692 453L688 547L682 607L672 647L660 677"/>
<path d="M727 265L733 290L733 380L732 397L727 447L717 482L718 522L708 538L688 547"/>
<path d="M727 447L733 441L745 442L748 453L747 535L735 555L713 568L708 578L708 597L701 605L682 608"/>
<path d="M1172 152L948 220L808 268L787 290L740 333L707 383"/>
<path d="M1200 172L950 243L865 263L813 290L767 323L745 350L720 393L705 447L700 490L698 513L688 547"/>
</g>
</svg>
</section>
</main>
<footer class="qstat d-flex align-items-center flex-fill">
<div class="qsearch d-flex align-items-center"><svg width="12" height="12" viewBox="0 0 12 12" class="me-2"><circle cx="5" cy="5" r="3.700" fill="none" stroke="#777"/><path d="M8 8l3.500 3.500" stroke="#777"/></svg>検索 (Ctrl + K)</div>
<span class="s1">座標</span>
<div class="qf s2 d-flex align-items-center">35.62653° , 139.25901°</div>
<svg width="16" height="18" viewBox="0 0 16 18" class="s3"><circle cx="6" cy="5" r="3.500" fill="none" stroke="#222" stroke-width="2"/><circle cx="9" cy="12" r="3.500" fill="none" stroke="#222" stroke-width="2"/><path d="M3 3l9 12" stroke="#222" stroke-width="1.500"/><path d="M11 1l3 4" stroke="#4a9" stroke-width="1.500"/></svg>
<span>縮尺</span>
<div class="qf s4 d-flex align-items-center">1:2551<span class="qcm d-flex align-items-center justify-content-center ms-auto"><i></i></span></div>
<svg width="12" height="15" viewBox="0 0 12 15" class="s5"><rect x="1" y="6" width="10" height="9" rx="1" fill="#777"/><path d="M3 6V4a3 3 0 0 1 6 0v2" fill="none" stroke="#777" stroke-width="1.500"/></svg>
<span>拡大</span>
<div class="qf s6 d-flex align-items-center">100%<span class="qsp d-flex flex-column align-items-center justify-content-center ms-auto"><i class="up"></i><i class="dw"></i></span></div>
<span class="s7">回転</span>
<div class="qf s8 d-flex align-items-center">0.0 °<span class="qsp d-flex flex-column align-items-center justify-content-center ms-auto"><i class="up"></i><i class="dw"></i></span></div>
<span class="qck s9">✓</span><span class="s10">レンダ</span>
<svg width="14" height="14" viewBox="0 0 14 14" class="s11"><circle cx="7" cy="7" r="6" fill="none" stroke="#777"/><ellipse cx="7" cy="7" rx="3" ry="6" fill="none" stroke="#777"/><path d="M1 5h12M1 9h12" stroke="#777"/></svg>
<span class="s12">EPSG:4326</span>
<svg width="15" height="15" viewBox="0 0 15 15" class="s13"><path d="M7.500 1a6.500 5.500 0 0 1 0 11H6l-3 3v-4a5.500 5.500 0 0 1 4.500-10z" fill="#777"/><path d="M4 6.500h1M7 6.500h1M10 6.500h1" stroke="#fff"/></svg>
</footer>
</div>
</body></html>
